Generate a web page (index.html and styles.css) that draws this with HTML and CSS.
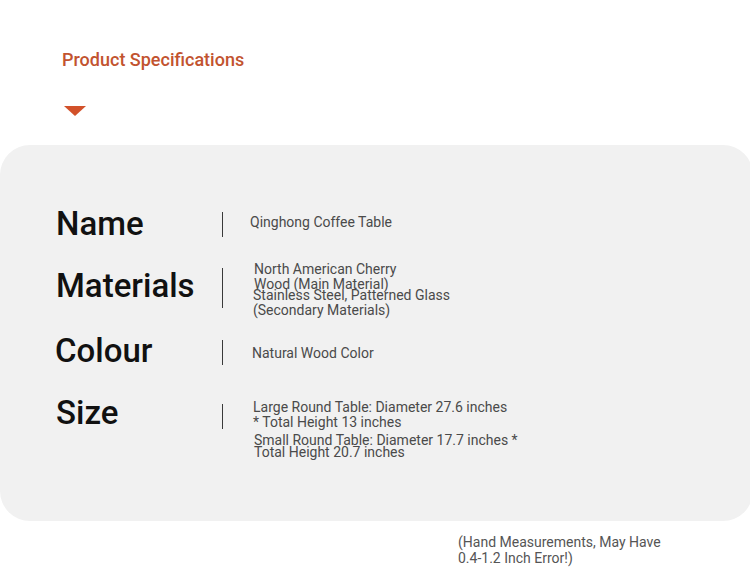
FILE: index.html
```html
<!DOCTYPE html>
<html>
<head>
<meta charset="utf-8">
<link rel="stylesheet" href="styles.css">
</head>
<body>
<header class="head">
  <h1 class="title">Product Specifications</h1>
  <div class="arrow"></div>
</header>
<section class="card">
  <div class="row">
    <div class="label-col"><span class="label">Name</span></div>
    <div class="bar"></div>
    <div class="value v-name"><p>Qinghong Coffee Table</p></div>
  </div>
  <div class="row">
    <div class="label-col"><span class="label label-m">Materials</span></div>
    <div class="bar bar-tall"></div>
    <div class="value v-mat">
      <p class="blk">North American Cherry<br>Wood (Main Material)</p>
      <p class="blk blk-over">Stainless Steel, Patterned Glass<br>(Secondary Materials)</p>
    </div>
  </div>
  <div class="row">
    <div class="label-col"><span class="label label-c">Colour</span></div>
    <div class="bar"></div>
    <div class="value v-col"><p>Natural Wood Color</p></div>
  </div>
  <div class="row">
    <div class="label-col"><span class="label label-s">Size</span></div>
    <div class="bar"></div>
    <div class="value v-size">
      <p class="blk">Large Round Table: Diameter 27.6 inches<br>* Total Height 13 inches</p>
      <p class="blk blk-tight">Small Round Table: Diameter 17.7 inches *<br>Total Height 20.7 inches</p>
    </div>
  </div>
</section>
<p class="note">(Hand Measurements, May Have 0.4-1.2 Inch Error!)</p>
</body>
</html>
```
FILE: styles.css
```css
* { box-sizing: border-box; }
html, body { margin: 0; padding: 0; }
body {
  width: 750px;
  height: 576px;
  overflow: hidden;
  background: #ffffff;
  font-family: Roboto, "Liberation Sans", sans-serif;
}
.head {
  padding: 49px 0 0 62px;
  height: 145px;
}
.title {
  margin: 0;
  font-size: 18px;
  line-height: 22px;
  font-weight: 500;
  color: #c2532f;
}
.arrow {
  margin: 35px 0 0 2px;
  width: 0;
  height: 0;
  border-left: 11px solid transparent;
  border-right: 11px solid transparent;
  border-top: 10px solid #d2512a;
}
.card {
  width: 753px;
  height: 376px;
  background: #f1f1f1;
  border-radius: 30px;
  padding: 47px 0 0 56px;
}
.row {
  display: flex;
  align-items: center;
  height: 64px;
}
.label-col {
  width: 166px;
}
.label {
  display: block;
  font-size: 33px;
  font-weight: 500;
  color: #111111;
  line-height: 38px;
  margin-top: -1px;
}
.label-m { margin-top: -4px; }
.label-c { margin-left: -1px; margin-top: -2px; }
.label-s { margin-top: -7px; }
.bar {
  width: 1px;
  height: 25px;
  background: #3a3a3a;
}
.bar-tall { height: 40px; }
.value {
  margin-left: 27px;
  font-size: 14px;
  font-weight: 400;
  color: #4a4a4a;
}
.value p { margin: 0; }
.v-name { margin-top: -5px; }
.v-mat { margin-left: 31px; margin-top: 4px; }
.v-col { margin-left: 29px; margin-top: 1px; }
.v-size { margin-left: 30px; margin-top: 26px; }
.blk { line-height: 15px; }
.blk-over { margin-top: -4px !important; margin-left: -1px !important; }
.blk-tight { line-height: 12px; margin-top: 4px !important; margin-left: 1px !important; }
.note {
  margin: 13px 0 0 458px;
  width: 215px;
  font-size: 14px;
  line-height: 16px;
  color: #555555;
}
```
